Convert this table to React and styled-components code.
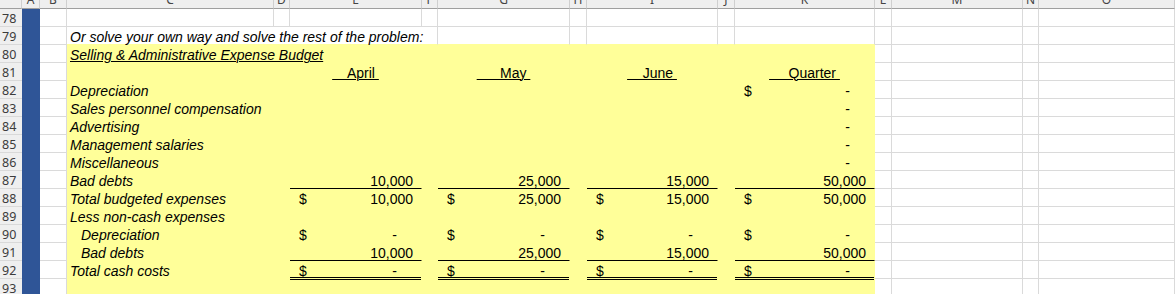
import React from 'react';
import styled, { createGlobalStyle, css } from 'styled-components';

const YELLOW = '#ffff99';
const BLUE = '#2f5597';
const GRID = '#dadada';
const FONT = '"Liberation Sans", Arial, sans-serif';
const UI_FONT = '"Noto Sans", "Liberation Sans", sans-serif';

const FILLS = { none: '#ffffff', yellow: YELLOW, blue: BLUE };
const lineOf = (fill) => (fill === 'none' || !fill ? GRID : FILLS[fill]);

const Global = createGlobalStyle`
  html, body { margin: 0; padding: 0; background: #fff; }
  body { overflow: hidden; }
`;

const Sheet = styled.div`
  display: grid;
  grid-template-columns: 22px 18px 27px 207px 16px 132px 16px 132px 17px 131px 17px 140px 17px 131px 16px 1fr;
  grid-template-rows: 9px;
  grid-auto-rows: 18px;
  width: 1175px;
  height: 294px;
  overflow: hidden;
`;

const Corner = styled.div`
  box-sizing: border-box;
  background: #efefef;
  border-right: 1px solid #cfcfcf;
  border-bottom: 1px solid #9f9f9f;
`;

const ColHead = styled.div`
  box-sizing: border-box;
  background: #efefef;
  border-right: 1px solid #cfcfcf;
  border-bottom: 1px solid #9f9f9f;
  overflow: hidden;
  display: flex;
  align-items: flex-end;
  justify-content: center;
  font: 12px/12px ${UI_FONT};
  color: #444;
`;

const ColLetter = styled.span`
  margin-bottom: 2px;
`;

const RowHead = styled.div`
  box-sizing: border-box;
  background: #efefef;
  border-bottom: 1px solid #d9d9d9;
  font: 12.5px ${UI_FONT};
  color: #3c3c3c;
  padding: 1px 0 0 2px;
  display: flex;
  align-items: center;
`;

const Cell = styled.div`
  box-sizing: border-box;
  min-width: 0;
  height: 18px;
  padding-top: 2px;
  font: 14px/16px ${FONT};
  color: #000;
  white-space: nowrap;
  background: ${(p) => FILLS[p.$fill || 'none']};
  border-right: 1px solid ${(p) => lineOf(p.$fill)};
  border-bottom: 1px solid ${(p) => p.$edge || lineOf(p.$fill)};
  ${(p) => p.$span && css`grid-column: span ${p.$span};`}
  ${(p) => p.$rule === 'single' && css`border-bottom-color: #000;`}
  ${(p) => p.$rule === 'double' && css`box-shadow: inset 0 -1px 0 #000;`}
  ${(p) => p.$rule === 'over' && css`box-shadow: inset 0 1px 0 #000;`}
`;

const Label = styled(Cell)`
  font-style: italic;
  padding-left: ${(p) => (p.$indent ? 14 : 3)}px;
`;

const Underlined = styled.span`
  white-space: pre;
  text-decoration: underline;
  text-decoration-thickness: 1px;
  text-underline-offset: 1px;
`;

const MonthCell = styled(Cell)`
  text-align: center;
`;

const Money = styled(Cell)`
  display: flex;
  padding-left: 9px;
  padding-right: 8px;
`;

const Dollar = styled.span``;

const Amount = styled.span`
  margin-left: auto;
  padding-right: ${(p) => (p.$zero ? '16px' : '0')};
`;

const LETTERS = ['A', 'B', 'C', 'D', 'E', 'F', 'G', 'H', 'I', 'J', 'K', 'L', 'M', 'N', 'O'];

const MONTHS = ['    April ', '      May ', '    June ', '     Quarter '];

const BODY = [
  { n: 82, label: 'Depreciation', vals: [null, null, null, { d: 1, v: '-' }] },
  { n: 83, label: 'Sales personnel compensation', vals: [null, null, null, { v: '-' }] },
  { n: 84, label: 'Advertising', vals: [null, null, null, { v: '-' }] },
  { n: 85, label: 'Management salaries', vals: [null, null, null, { v: '-' }] },
  { n: 86, label: 'Miscellaneous', vals: [null, null, null, { v: '-' }] },
  {
    n: 87,
    label: 'Bad debts',
    rule: 'single',
    vals: [{ v: '10,000' }, { v: '25,000' }, { v: '15,000' }, { v: '50,000' }],
  },
  {
    n: 88,
    label: 'Total budgeted expenses',
    vals: [{ d: 1, v: '10,000' }, { d: 1, v: '25,000' }, { d: 1, v: '15,000' }, { d: 1, v: '50,000' }],
  },
  { n: 89, label: 'Less non-cash expenses', vals: [null, null, null, null] },
  {
    n: 90,
    label: 'Depreciation',
    indent: true,
    vals: [{ d: 1, v: '-' }, { d: 1, v: '-' }, { d: 1, v: '-' }, { d: 1, v: '-' }],
  },
  {
    n: 91,
    label: 'Bad debts',
    indent: true,
    rule: 'single',
    vals: [{ v: '10,000' }, { v: '25,000' }, { v: '15,000' }, { v: '50,000' }],
  },
  {
    n: 92,
    label: 'Total cash costs',
    rule: 'double',
    vals: [{ d: 1, v: '-' }, { d: 1, v: '-' }, { d: 1, v: '-' }, { d: 1, v: '-' }],
  },
  { n: 93, label: '', rule: 'over', vals: [null, null, null, null] },
];

function MoneyCell({ spec, rule }) {
  if (!spec) return <Cell $fill="yellow" $rule={rule} />;
  return (
    <Money $fill="yellow" $rule={rule}>
      {spec.d ? <Dollar>$</Dollar> : null}
      <Amount $zero={spec.v === '-'}>{spec.v}</Amount>
    </Money>
  );
}

function Lead({ n }) {
  return (
    <>
      <RowHead>{n}</RowHead>
      <Cell $fill="blue" />
      <Cell />
    </>
  );
}

function Tail() {
  return (
    <>
      <Cell />
      <Cell />
      <Cell />
      <Cell />
    </>
  );
}

function Gap() {
  return <Cell $fill="yellow" />;
}

export default function App() {
  return (
    <>
      <Global />
      <Sheet>
        <Corner />
        {LETTERS.map((l) => (
          <ColHead key={l}>
            <ColLetter>{l}</ColLetter>
          </ColHead>
        ))}

        {/* row 78 */}
        <Lead n={78} />
        {Array.from({ length: 9 }).map((_, i) => (
          <Cell key={i} />
        ))}
        <Tail />

        {/* row 79 */}
        <Lead n={79} />
        <Label $span={4} $edge={YELLOW}>
          Or solve your own way and solve the rest of the problem:
        </Label>
        {Array.from({ length: 5 }).map((_, i) => (
          <Cell key={i} $edge={YELLOW} />
        ))}
        <Tail />

        {/* row 80 */}
        <Lead n={80} />
        <Label $fill="yellow" $span={3}>
          <Underlined>Selling &amp; Administrative Expense Budget</Underlined>
        </Label>
        {Array.from({ length: 6 }).map((_, i) => (
          <Cell key={i} $fill="yellow" />
        ))}
        <Tail />

        {/* row 81 */}
        <Lead n={81} />
        <Cell $fill="yellow" />
        <Gap />
        {MONTHS.map((m, i) => (
          <React.Fragment key={m}>
            <MonthCell $fill="yellow">
              <Underlined>{m}</Underlined>
            </MonthCell>
            {i < 3 ? <Gap /> : null}
          </React.Fragment>
        ))}
        <Tail />

        {BODY.map((row) => (
          <React.Fragment key={row.n}>
            <Lead n={row.n} />
            <Label $fill="yellow" $indent={row.indent}>
              {row.label}
            </Label>
            <Gap />
            <MoneyCell spec={row.vals[0]} rule={row.rule} />
            <Gap />
            <MoneyCell spec={row.vals[1]} rule={row.rule} />
            <Gap />
            <MoneyCell spec={row.vals[2]} rule={row.rule} />
            <Gap />
            <MoneyCell spec={row.vals[3]} rule={row.rule} />
            <Tail />
          </React.Fragment>
        ))}
      </Sheet>
    </>
  );
}
